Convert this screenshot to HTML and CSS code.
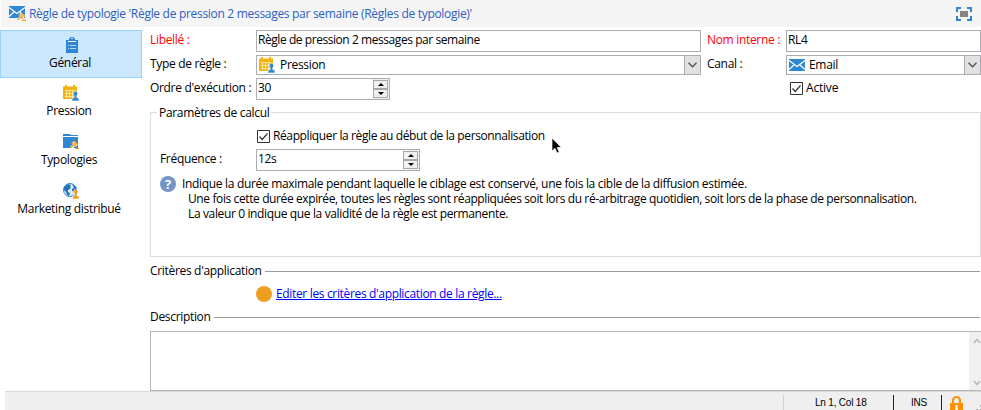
FILE: index.html
```html
<!DOCTYPE html>
<html lang="fr">
<head>
<meta charset="utf-8">
<title>Règle de typologie</title>
<link rel="stylesheet" href="styles.css">
</head>
<body>
<svg class="defs" width="0" height="0">
  <symbol id="calendar" viewBox="0 0 16 16">
    <path fill="#f0b310" d="M0 1.500h2V0h2v1.500h6V0h2v1.500h2V14H0z"/>
    <path fill="none" stroke="#fbe3a0" d="M2 5.500h10M2 8.500h10M2 11.500h9M3.500 5v8M6.500 5v8M9.500 5v8"/>
    <path fill="#2f86d2" stroke="#fff" stroke-width=".6" d="M10.500 9.500a2.200 2.200 0 1 1 4 0L13.700 11v1.500l2.300 1V16H9v-2.500l2.300-1V11z"/>
  </symbol>
  <symbol id="mail" viewBox="0 0 16 12">
    <path fill="#2f86d2" d="M0 0h16v12H0z"/>
    <path fill="none" stroke="#fff" stroke-width="1.300" d="M0 1.500l8 6 8-6M0 10.500l5-4.500M16 10.500l-5-4.500"/>
  </symbol>
  <symbol id="gavel" viewBox="0 0 9 9">
    <path fill="none" stroke="#fff" stroke-width="3" d="M2.500 2.500l4 3.500M1 8l4-4"/>
    <path fill="none" stroke="#f29a1f" stroke-width="1.200" d="M4 .7l4 4M1.800 2.900l4 4M.5 8l4-4M5 8.400h4"/>
    <path fill="#f7b75c" d="M4.300 1.800l2.600 2.600-1.700 1.700-2.600-2.600z"/>
  </symbol>
  <symbol id="check" viewBox="0 0 13 13">
    <path fill="#fff" stroke="#333" d="M.5.500h12v12H.5z"/>
    <path fill="none" stroke="#333" stroke-width="1.200" d="M2.500 6.500l2.700 3 5.300-6"/>
  </symbol>
  <symbol id="chevron" viewBox="0 0 9 6">
    <path fill="none" stroke="#505050" stroke-width="1.300" d="M.5.800l4 4 4-4"/>
  </symbol>
</svg>

<header class="titlebar">
  <svg class="title-icon" width="17" height="16"><use href="#mail" width="16" height="12"/><use href="#gavel" x="8" y="6" width="9" height="9"/></svg>
  <h1 class="t-title">Règle de typologie 'Règle de pression 2 messages par semaine (Règles de typologie)'</h1>
  <svg class="expand" width="16" height="14" viewBox="0 0 16 14"><path fill="none" stroke="#2f86d2" stroke-width="2" d="M1 5V1h4M11 1h4v4M15 9v4h-4M5 13H1V9"/><path fill="#858585" d="M4 4h8v6H4z"/></svg>
</header>

<div class="main">
  <nav class="sidebar">
    <a class="item selected">
      <svg width="16" height="16"><path fill="#2f86d2" d="M2 3h3V1.500L7 0h2l2 1.500V3h3v13H2z"/><path stroke="#fff" d="M4 4.500h8"/><path stroke="#b8dcf7" d="M4 8.500h1M6 8.500h6M4 11.500h1M6 11.500h6"/><path fill="#cce8ff" d="M7 1h2v1H7z"/></svg>
      <span>Général</span>
    </a>
    <a class="item"><svg width="16" height="16"><use href="#calendar"/></svg><span>Pression</span></a>
    <a class="item">
      <svg width="16" height="16"><path fill="#2f86d2" d="M0 0h7l1 1h7v1H0zM0 3h15v11H0z"/><use href="#gavel" x="7" y="6" width="9" height="9"/></svg>
      <span>Typologies</span>
    </a>
    <a class="item">
      <svg width="16" height="16"><circle cx="7" cy="7" r="6.500" fill="#d9ebf8" stroke="#2f86d2"/><path fill="#2574b8" d="M1 4l4-3 3 1-1 2 1 1-3 2v2l2 1-1 3-2-1-1-3-2-2zM9 1l4 3 1 4-2 1-3-1V6l2-1z"/><path fill="#f29a1f" stroke="#fff" stroke-width=".6" d="M10.800 9.500a2.200 2.200 0 1 1 4 0L14 11.200v1.500l2 .8V16H9.600v-2.500l2-.8v-1.500z"/></svg>
      <span>Marketing distribué</span>
    </a>
  </nav>

  <main class="content">
    <section class="form">
      <label class="required">Libellé :</label>
      <div class="field tall"><span class="t-lib">Règle de pression 2 messages par semaine</span></div>
      <label class="required second">Nom interne :</label>
      <div class="field tall">RL4</div>

      <label>Type de règle :</label>
      <div class="field combo"><svg width="16" height="16"><use href="#calendar"/></svg><span>Pression</span><i class="drop"><svg width="9" height="6"><use href="#chevron"/></svg></i></div>
      <label class="second">Canal :</label>
      <div class="field combo mailbox"><svg width="16" height="12"><use href="#mail"/></svg><span>Email</span><i class="drop"><svg width="9" height="6"><use href="#chevron"/></svg></i></div>

      <label class="order">Ordre d'exécution :</label>
      <div class="field tall number">30<i class="spin"><b class="up"></b><b class="down"></b></i></div>
      <span></span>
      <div class="check active"><svg width="13" height="13"><use href="#check"/></svg><span>Active</span></div>
    </section>

    <section class="group">
      <h2><span>Paramètres de calcul</span></h2>
      <div class="check reapply"><svg width="13" height="13"><use href="#check"/></svg><span class="t-reapply">Réappliquer la règle au début de la personnalisation</span></div>
      <div class="frequency"><label>Fréquence :</label><div class="field tall number wide">12s<i class="spin"><b class="up"></b><b class="down"></b></i></div></div>
      <div class="help">
        <span class="question">?</span>
        <div class="help-text">
          <p class="t-h1">Indique la durée maximale pendant laquelle le ciblage est conservé, une fois la cible de la diffusion estimée.</p>
          <p class="indent t-h2">Une fois cette durée expirée, toutes les règles sont réappliquées soit lors du ré-arbitrage quotidien, soit lors de la phase de personnalisation.</p>
          <p class="indent t-h3">La valeur 0 indique que la validité de la règle est permanente.</p>
        </div>
      </div>
    </section>

    <h2 class="rule criteria"><span>Critères d'application</span></h2>
    <div class="edit"><i class="dot"></i><a class="t-edit">Editer les critères d'application de la règle...</a></div>
    <h2 class="rule"><span>Description</span></h2>
    <div class="textarea"><div class="scroll">
      <svg width="8" height="6"><path d="M1 5l3-3.500L7 5"/></svg>
      <svg width="8" height="6"><path d="M1 1l3 3.500L7 1"/></svg>
    </div></div>
  </main>
</div>

<footer class="status">
  <span class="sep light"></span><span class="position">Ln 1, Col 18</span>
  <span class="sep"></span><span class="mode">INS</span><span class="sep"></span>
  <svg class="lock" width="13" height="15"><path fill="none" stroke="#ff9000" stroke-width="2.200" d="M3 8V4.500a3.500 3.500 0 0 1 7 0V8"/><path fill="#ff9000" d="M0 7h13v8H0z"/><path fill="#fff" d="M5.500 9h2v2.500L8 15H5l.5-3.500z"/></svg>
  <svg class="grip" width="8" height="6"><path fill="#b5b5b5" d="M5 0h2v2H5zM1 4h2v2H1zM5 4h2v2H5z"/></svg>
</footer>
<svg class="cursor" width="12" height="18"><path fill="#000" stroke="#fff" stroke-width=".7" d="M1 1v13l3-2.800L6 16l2.200-1L6.200 10.500h4z"/></svg>
</body>
</html>
```
FILE: styles.css
```css
* { box-sizing: border-box; }
body { margin: 0; width: 981px; height: 410px; overflow: hidden; display: flex; flex-direction: column; background: #fff; color: #000; font: 12px/16px "Open Sans", "Noto Sans", sans-serif; letter-spacing: -.32px; white-space: nowrap; }
h1, h2, p { margin: 0; font-size: inherit; font-weight: normal; }
svg { flex: none; display: block; }
i { font-style: normal; }
.defs { position: absolute; }
.titlebar { height: 27px; flex: none; margin-left: 1px; padding: 0 9px 0 8px; display: flex; align-items: center; background: #f5f5f5; color: #2b5fc4; }
.title-icon { margin-right: 3px; }
.t-title { letter-spacing: -.3px; }
.t-lib { letter-spacing: -.44px; }
.t-reapply { letter-spacing: -.385px; }
.t-h1 { letter-spacing: -.325px; }
.t-h2 { letter-spacing: -.39px; }
.t-h3 { letter-spacing: -.365px; }
.t-edit { letter-spacing: -.34px; }
.expand { margin-left: auto; }
.main { height: 364px; flex: none; display: flex; }
.sidebar { width: 142px; padding-top: 3px; flex: none; }
.item { height: 48px; margin-bottom: 1px; padding-top: 7px; display: flex; flex-direction: column; align-items: center; gap: 2px; }
.item span { margin-right: 4px; }
.item.selected { margin-bottom: 0; background: #cce8ff; border: 1px solid #99d1ff; padding-top: 6px; }
.item.selected span { margin-right: 2px; }
.selected svg { margin-left: 2px; }
.content { flex: 1; min-width: 0; padding: 3px 0 0 8px; }
.form { display: grid; grid-template-columns: 106px 445px 85px 195px; grid-template-rows: 22px 20px 22px; row-gap: 3px; }
.form label { padding-top: 2px; }
.form label:nth-of-type(3), .form label:nth-of-type(4) { padding-top: 1px; }
.form .order { padding-top: 2px; }
.required { color: #f00; }
.second { padding-left: 6px; }
.field { position: relative; height: 20px; border: 1px solid #abadb3; padding-left: 1px; background: #fff; display: flex; }
.field.tall { height: 22px; padding-top: 1px; }
.combo { align-items: center; padding-left: 2px; gap: 5px; }
.mailbox { gap: 4px; }
.drop { width: 16px; height: 18px; margin-left: auto; background: #e1e1e1; border-left: 1px solid #abadb3; display: flex; align-items: center; justify-content: center; }
.number { width: 134px; }
.number.wide { width: 164px; }
.spin { width: 16px; height: 20px; margin: -1px 0 0 auto; padding: 1px 1px 1px 0; background: #f0f0f0; display: grid; grid-template-rows: 1fr 1fr; }
.spin b { border: 1px solid #a8a8a8; display: flex; align-items: center; justify-content: center; }
.spin b::before { content: ""; border: 3px solid transparent; border-top-width: 0; border-bottom-color: #000; }
.spin .down::before { border-top: 3px solid #000; border-bottom: 0; }
.check { display: flex; align-items: center; gap: 3px; height: 16px; }
.active { margin: 2px 0 0 4px; letter-spacing: -.2px; }
.group { position: relative; width: 831px; height: 145px; margin-top: 12px; border: 1px solid #dcdcdc; padding: 0 0 0 9px; }
.group h2 { height: 15px; margin: -8px 0 0 -3px; }
.group h2 span { background: #fff; padding: 0 2px; }
.reapply { margin: 8px 0 5px 97px; }
.frequency { display: grid; grid-template-columns: 96px 164px; }
.frequency label { padding-top: 2px; }
.help { display: flex; gap: 6px; margin-top: 5px; }
.question { width: 16px; height: 16px; border-radius: 50%; background: #7495c7; color: #fff; font-weight: 700; font-size: 13px; text-align: center; }
.help-text { line-height: 15px; }
.indent { padding-left: 6px; }
.rule { display: flex; align-items: center; gap: 3px; height: 16px; width: 830px; }
.rule span { letter-spacing: -.32px; }
.rule::after { content: ""; flex: 1; height: 1px; background: #9b9b9b; }
.criteria { margin-top: 6px; }
.edit { display: flex; align-items: center; gap: 4px; margin: 7px 0 7px 106px; height: 16px; color: #00f; text-decoration: underline; }
.dot { width: 16px; height: 16px; border-radius: 50%; background: #ee9f20; }
.textarea { margin-top: 6px; height: 60px; border: 1px solid #b4b5bb; border-right: 0; display: flex; justify-content: flex-end; }
.scroll { width: 12px; background: #f0f0f0; padding: 6px 0 4px 4px; display: flex; flex-direction: column; justify-content: space-between; }
.scroll path { fill: none; stroke: #b9b9b9; stroke-width: 1.600; }
.status { height: 19px; flex: none; margin-left: 5px; background: #efefef; border-top: 1px solid #d9d9dc; display: flex; font: 10px/21px "Liberation Sans", sans-serif; letter-spacing: -.2px; }
.sep { width: 1px; height: 16px; margin-top: 3px; flex: none; background: #222; }
.sep.light { margin-left: 778px; background: #d0d0d0; }
.position { width: 109px; padding-left: 31px; flex: none; }
.mode { width: 47px; padding-left: 17px; flex: none; }
.lock { margin: 4px 0 0 8px; }
.grip { margin: 13px 0 0 12px; }
.cursor { position: absolute; left: 551px; top: 137px; }
```
